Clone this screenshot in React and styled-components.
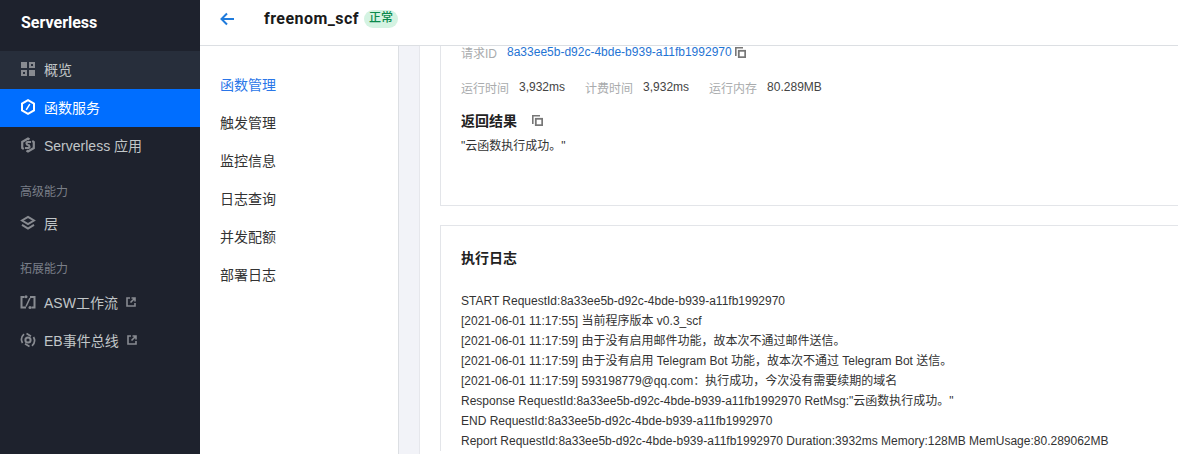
import React from "react";
import styled, { createGlobalStyle } from "styled-components";

const Global = createGlobalStyle`
  html, body { margin: 0; padding: 0; height: 100%; overflow: hidden; background: #fff; }
  body { font-family: "Liberation Sans", "Noto Sans CJK SC", sans-serif; font-size: 12px; color: #333; }
  #root { height: 454px; }
`;

const Page = styled.div`display: flex; width: 1178px; height: 454px; overflow: hidden;`;
const Sidebar = styled.aside`width: 200px; flex: none; background: #1e222d; color: #c1c6c8;`;
const Brand = styled.div`height: 51px; padding: 0 0 7px 21px; box-sizing: border-box; display: flex; align-items: center; color: #fff; font-size: 16px; font-weight: 700; font-family: Roboto, "Liberation Sans", sans-serif;`;
const MenuItem = styled.div`
  height: 38px; box-sizing: border-box; padding: 0 0 2px 20px; display: flex; align-items: center; font-size: 14px;
  background: ${p => p.$active ? "#006eff" : p.$hover ? "#272e3b" : "transparent"};
  color: ${p => p.$active ? "#fff" : "#c1c6c8"};
`;
const MenuIcon = styled.svg`width: 16px; height: 16px; margin-right: 8px; flex: none; color: ${p => p.$active ? "#fff" : "#888b91"};`;
const External = styled.svg`width: 10px; height: 10px; margin-left: 8px; color: #888b91;`;
const Group = styled.div`height: ${p => p.$h}px; padding-top: ${p => p.$top}px; padding-left: 20px; box-sizing: border-box; font-size: 12px; line-height: 18px; color: #7a7f88;`;

const Main = styled.div`flex: 1; display: flex; flex-direction: column; min-width: 0;`;
const Header = styled.header`height: 46px; flex: none; box-sizing: border-box; border-bottom: 1px solid #dcdfe3; display: flex; align-items: center; padding: 0 0 7px 20px;`;
const Back = styled.svg`width: 15px; height: 14px; color: #1f7bdc; margin-right: 29px;`;
const Title = styled.h1`margin: 0 5px 0 0; font: 700 16px/20px Roboto, "Liberation Sans", sans-serif; letter-spacing: .45px; color: #1a1a1a;`;
const Badge = styled.span`height: 18px; padding: 0 5px; border-radius: 9px; background: #d4f3e2; color: #0a8a4c; font-size: 12px; line-height: 17px; font-weight: 500;`;
const Body = styled.div`flex: 1; display: flex; min-height: 0;`;
const SubNav = styled.nav`width: 199px; flex: none; box-sizing: border-box; padding-top: 20px; border-right: 1px solid #dcdfe3;`;
const SubItem = styled.div`height: 38px; line-height: 38px; padding-left: 20px; font-size: 14px; color: ${p => p.$active ? "#2a76e8" : "#333"};`;
const Strip = styled.div`width: 20px; flex: none; background: #f2f3f8; border-right: 1px solid #e6e7ec;`;
const Content = styled.div`flex: 1; padding-left: 20px; min-width: 0; overflow: hidden;`;
const ResultCard = styled.section`height: 162px; margin: -2px 0 19px; box-sizing: border-box; border: 1px solid #e3e5e9; border-width: 0 0 1px 1px; padding: 0 20px;`;
const LogCard = styled.section`border: 1px solid #e3e5e9; border-width: 1px 0 0 1px; padding: 23px 20px 0;`;
const IdRow = styled.div`display: flex; align-items: center; height: 16px; margin-bottom: 18px;`;
const Label = styled.span`color: #a9abad; margin-right: 10px;`;
const Link = styled.span`color: #1f74d4;`;
const Metrics = styled.div`display: flex; align-items: center; height: 18px; margin-bottom: 15px;`;
const Metric = styled.span`color: #444; margin-right: 20px;`;
const SectionHead = styled.div`display: flex; align-items: center; height: 18px; font-size: 14px; font-weight: 700; color: #222;`;
const CopyIcon = styled.svg`width: 11px; height: 11px; margin-left: ${p => p.$m}px; margin-top: 1px; color: #777; flex: none;`;
const Output = styled.div`margin-top: 8px; line-height: 18px; color: #333;`;
const LogTitle = styled.h2`margin: 0 0 24px; font-size: 14px; font-weight: 700; line-height: 18px; color: #222;`;
const LogLine = styled.div`line-height: 20px; white-space: nowrap; color: #333;`;

const Stroke = { fill: "none", stroke: "currentColor", strokeWidth: 2 };

const Copy = ({ m }) => (
  <CopyIcon $m={m} viewBox="0 0 11 11">
    <path d="M.8 9V.8H8" fill="none" stroke="currentColor" strokeWidth="1.6" />
    <rect x="3.8" y="3.8" width="6.4" height="6.4" fill="none" stroke="currentColor" strokeWidth="1.8" />
  </CopyIcon>
);

const Ext = () => (
  <External viewBox="0 0 10 10">
    <path d="M4 1H1v8h8V6" fill="none" stroke="currentColor" strokeWidth="1.6" />
    <path d="M5.500 1H9v3.500M9 1 4.500 5.500" fill="none" stroke="currentColor" strokeWidth="1.6" />
  </External>
);

const logs = [
  "START RequestId:8a33ee5b-d92c-4bde-b939-a11fb1992970",
  "[2021-06-01 11:17:55] 当前程序版本 v0.3_scf",
  "[2021-06-01 11:17:59] 由于没有启用邮件功能，故本次不通过邮件送信。",
  "[2021-06-01 11:17:59] 由于没有启用 Telegram Bot 功能，故本次不通过 Telegram Bot 送信。",
  "[2021-06-01 11:17:59] 593198779@qq.com：执行成功，今次没有需要续期的域名",
  "Response RequestId:8a33ee5b-d92c-4bde-b939-a11fb1992970 RetMsg:\"云函数执行成功。\"",
  "END RequestId:8a33ee5b-d92c-4bde-b939-a11fb1992970",
  "Report RequestId:8a33ee5b-d92c-4bde-b939-a11fb1992970 Duration:3932ms Memory:128MB MemUsage:80.289062MB",
];

const subs = ["函数管理", "触发管理", "监控信息", "日志查询", "并发配额", "部署日志"];

export default function App() {
  return (
    <Page>
      <Global />
      <Sidebar>
        <Brand>Serverless</Brand>
        <MenuItem $hover>
          <MenuIcon viewBox="0 0 16 16">
            <path fill="currentColor" fillRule="evenodd" d="M1 1h6v6H1zM9 1h6v6H9zm2 2v2h2V3zM1 9h6v6H1zm2 2v2h2v-2zM9 9h6v6H9z" />
          </MenuIcon>
          概览
        </MenuItem>
        <MenuItem $active>
          <MenuIcon $active viewBox="0 0 16 16">
            <path {...Stroke} d="M8 1.200 14 4.600v6.800L8 14.800l-6-3.400V4.600z" />
            <path {...Stroke} strokeWidth="1.500" d="M9.800 5.200 6.200 10.800" />
          </MenuIcon>
          函数服务
        </MenuItem>
        <MenuItem>
          <MenuIcon viewBox="0 0 16 16">
            <path {...Stroke} strokeWidth="2.200" d="M9.500 2.500 8 1.600 2.200 5v6l1.600 1M6.500 13.500l1.500.9 5.800-3.400V5l-1.600-1" />
            <path {...Stroke} strokeWidth="2" d="M11 5H7.500C6 5 6 8 8 8s2 3 .500 3H5" />
          </MenuIcon>
          Serverless 应用
        </MenuItem>
        <Group $h={40} $top={18}>高级能力</Group>
        <MenuItem>
          <MenuIcon viewBox="0 0 16 16">
            <path {...Stroke} d="M8 1.800 14 5.500 8 9.200 2 5.500z" />
            <path {...Stroke} d="M2 9.800 8 13.500l6-3.700" />
          </MenuIcon>
          层
        </MenuItem>
        <Group $h={41} $top={17}>拓展能力</Group>
        <MenuItem>
          <MenuIcon viewBox="0 0 16 16">
            <path {...Stroke} d="M4.500 3H1.500v10.500H6M11.500 13.500h3V3H10" />
            <path {...Stroke} strokeWidth="1.500" d="M10 4 6 12.500" />
            <circle cx="6" cy="2.800" r="1.500" fill="currentColor" />
            <circle cx="10" cy="13.500" r="1.500" fill="currentColor" />
          </MenuIcon>
          ASW工作流
          <Ext />
        </MenuItem>
        <MenuItem>
          <MenuIcon viewBox="0 0 16 16">
            <circle {...Stroke} cx="8" cy="8" r="2.600" />
            <path {...Stroke} strokeWidth="1.700" d="M4 2.200C1.500 4.500 .800 8 2.500 11M12 13.800c2.500-2.300 3.200-5.800 1.500-8.800M6.500 1.500 11 4.200M9.500 14.500 5 11.800" />
          </MenuIcon>
          EB事件总线
          <Ext />
        </MenuItem>
      </Sidebar>
      <Main>
        <Header>
          <Back viewBox="0 0 15 14">
            <path fill="none" stroke="currentColor" strokeWidth="2" d="M14 7H1.500M7 1.500 1.500 7 7 12.500" />
          </Back>
          <Title>freenom_scf</Title>
          <Badge>正常</Badge>
        </Header>
        <Body>
          <SubNav>
            {subs.map((s, i) => <SubItem key={s} $active={i === 0}>{s}</SubItem>)}
          </SubNav>
          <Strip />
          <Content>
            <ResultCard>
              <IdRow>
                <Label>请求ID</Label>
                <Link>8a33ee5b-d92c-4bde-b939-a11fb1992970</Link>
                <Copy m={3} />
              </IdRow>
              <Metrics>
                <Label>运行时间</Label><Metric>3,932ms</Metric>
                <Label>计费时间</Label><Metric>3,932ms</Metric>
                <Label>运行内存</Label><Metric>80.289MB</Metric>
              </Metrics>
              <SectionHead>返回结果<Copy m={15} /></SectionHead>
              <Output>"云函数执行成功。"</Output>
            </ResultCard>
            <LogCard>
              <LogTitle>执行日志</LogTitle>
              {logs.map(l => <LogLine key={l}>{l}</LogLine>)}
            </LogCard>
          </Content>
        </Body>
      </Main>
    </Page>
  );
}
